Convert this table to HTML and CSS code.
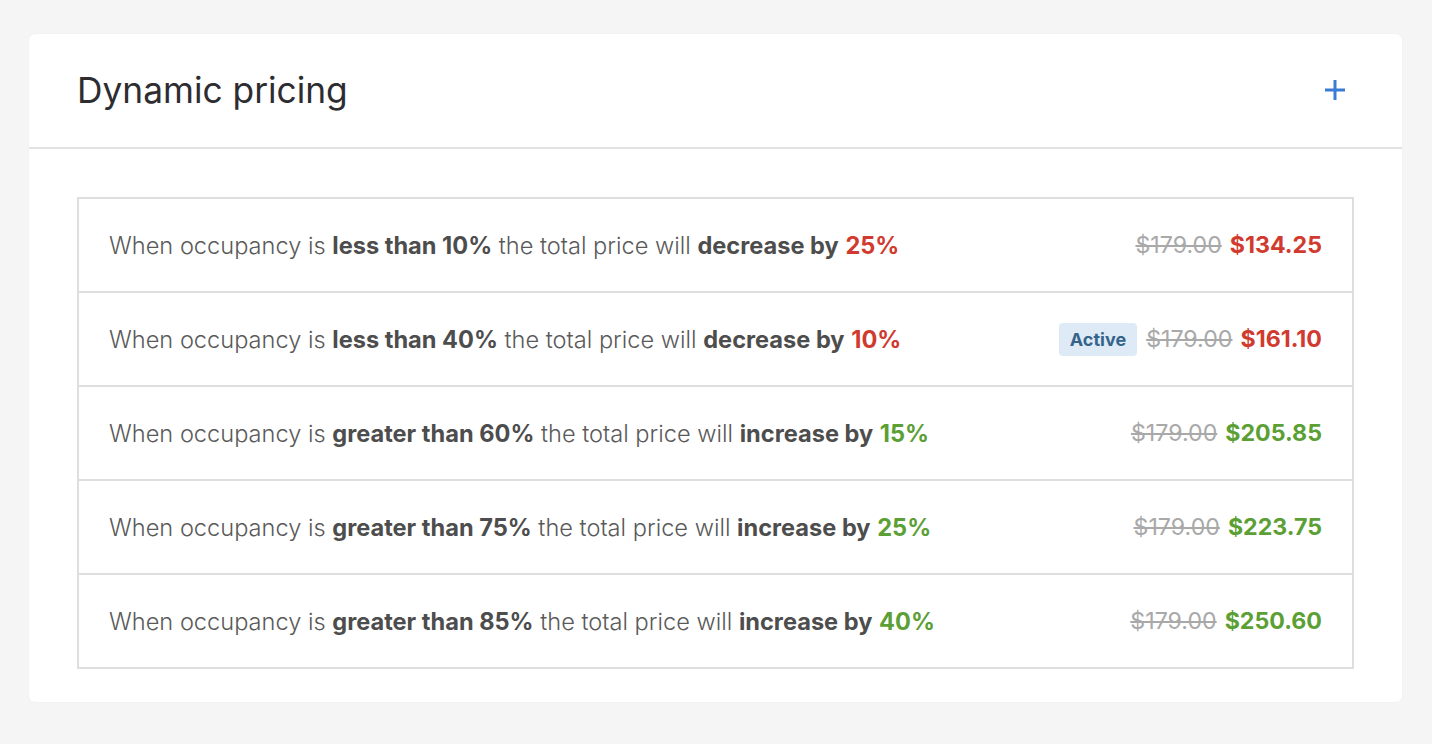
FILE: index.html
```html
<!DOCTYPE html>
<html>
<head>
<meta charset="utf-8">
<link rel="stylesheet" href="styles.css">
</head>
<body>
<div class="card">
  <div class="card-header">
    <h2 class="title">Dynamic pricing</h2>
    <button class="add-btn" aria-label="Add">
      <svg width="22" height="22" viewBox="0 0 22 22"><path d="M11 1v20M1 11h20" stroke="#3a7bd5" stroke-width="3" fill="none"/></svg>
    </button>
  </div>
  <div class="card-body">
    <div class="rules">
      <div class="rule">
        <div class="rule-text">When occupancy is <b>less than 10%</b> the total price will <b>decrease by</b> <span class="down">25%</span></div>
        <div class="rule-price"><s class="old">$179.00</s><span class="new down">$134.25</span></div>
      </div>
      <div class="rule">
        <div class="rule-text">When occupancy is <b>less than 40%</b> the total price will <b>decrease by</b> <span class="down">10%</span></div>
        <div class="rule-price"><span class="badge">Active</span><s class="old">$179.00</s><span class="new down">$161.10</span></div>
      </div>
      <div class="rule">
        <div class="rule-text">When occupancy is <b>greater than 60%</b> the total price will <b>increase by</b> <span class="up">15%</span></div>
        <div class="rule-price"><s class="old">$179.00</s><span class="new up">$205.85</span></div>
      </div>
      <div class="rule">
        <div class="rule-text">When occupancy is <b>greater than 75%</b> the total price will <b>increase by</b> <span class="up">25%</span></div>
        <div class="rule-price"><s class="old">$179.00</s><span class="new up">$223.75</span></div>
      </div>
      <div class="rule">
        <div class="rule-text">When occupancy is <b>greater than 85%</b> the total price will <b>increase by</b> <span class="up">40%</span></div>
        <div class="rule-price"><s class="old">$179.00</s><span class="new up">$250.60</span></div>
      </div>
    </div>
  </div>
</div>
</body>
</html>
```
FILE: styles.css
```css
html, body {
  margin: 0;
  padding: 0;
}
body {
  background: #f5f5f5;
  font-family: Inter, "Noto Sans", sans-serif;
  padding: 34px 30px 43px 29px;
}
.card {
  background: #fff;
  border-radius: 6px;
  box-shadow: 0 0 2px rgba(0,0,0,0.06);
}
.card-header {
  height: 113px;
  border-bottom: 2px solid #e3e3e3;
  display: flex;
  align-items: center;
  justify-content: space-between;
  padding: 0 56px 0 48px;
}
.title {
  margin: 0;
  font-size: 35.3px;
  font-weight: 400;
  color: #2d2d31;
  letter-spacing: 0;
}
.add-btn {
  background: none;
  border: 0;
  padding: 0;
  margin-bottom: 2px;
  display: flex;
  cursor: pointer;
}
.card-body {
  padding: 48px 48px 33px 48px;
}
.rules {
  border: 2px solid #dedede;
}
.rule {
  height: 92px;
  display: flex;
  align-items: center;
  justify-content: space-between;
  padding: 0 30px 0 30px;
  border-top: 2px solid #dedede;
  font-size: 23.6px;
  color: #5a5a5a;
}
.rule:first-child {
  border-top: 0;
}
.rule-text {
  font-weight: 300;
}
.rule-text b {
  font-weight: 700;
  color: #4d4d4d;
}
.rule-text .down, .rule-text .up {
  font-weight: 700;
}
.down { color: #d13a2e; }
.up { color: #5b9f35; }
.rule-price {
  display: flex;
  align-items: center;
  gap: 8px;
  font-size: 23.2px;
}
.old {
  color: #a9a9a9;
  font-weight: 400;
}
.new {
  font-weight: 700;
}
.badge {
  background: #deebf7;
  color: #35648a;
  font-weight: 700;
  font-size: 18px;
  border-radius: 4px;
  padding: 6px 11px;
  margin-right: 1px;
}
```
